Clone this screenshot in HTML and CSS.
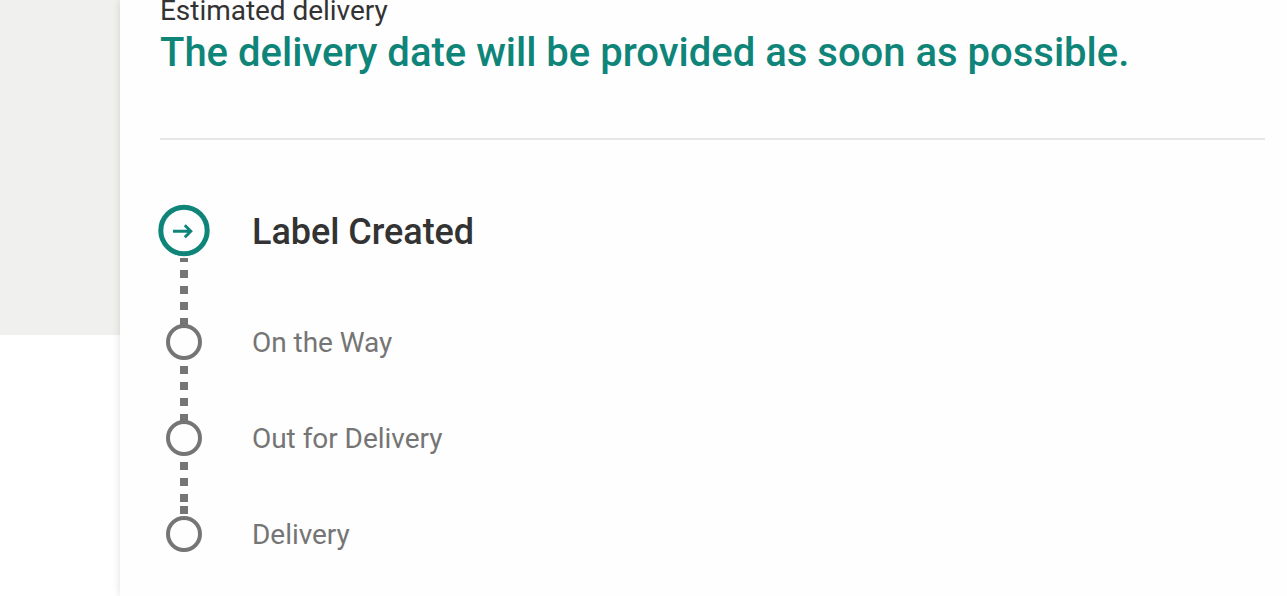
FILE: index.html
```
<!DOCTYPE html>
<html lang="en">

<head>
    <meta charset="UTF-8">
    <meta name="viewport" content="width=device-width, initial-scale=1.0">
    <title>Estimated delivery</title>
    <link rel="stylesheet" href="styles.css">
</head>

<body>
    <div class="page">
        <div class="side"></div>
        <main class="card">
            <p class="label">Estimated delivery</p>
            <h1>The delivery date will be provided as soon as possible.</h1>
            <hr>
            <ul class="steps">
                <li class="step current">
                    <svg class="marker" width="52" height="122" viewBox="0 0 52 122" fill="#757575">
                        <circle cx="26" cy="26.5" r="23.2" fill="none" stroke="#0f857a" stroke-width="5"/>
                        <path d="M15 27.2h17.5M26.8 21.2l6 6-6 6" fill="none" stroke="#0f857a" stroke-width="2.9"/>
                        <path d="M22 54h8v4h-8zM22 66h8v8h-8zM22 82h8v8h-8zM22 98h8v8h-8zM22 114h8v8h-8z"/>
                    </svg>
                    <span>Label Created</span>
                </li>
                <li class="step">
                    <svg class="marker" width="52" height="98" viewBox="0 0 52 98" fill="#757575">
                        <circle cx="26" cy="18" r="16" fill="none" stroke="#757575" stroke-width="4"/>
                        <path d="M22 42h8v8h-8zM22 58h8v8h-8zM22 74h8v8h-8zM22 90h8v8h-8z"/>
                    </svg>
                    <span>On the Way</span>
                </li>
                <li class="step">
                    <svg class="marker" width="52" height="98" viewBox="0 0 52 98" fill="#757575">
                        <circle cx="26" cy="18" r="16" fill="none" stroke="#757575" stroke-width="4"/>
                        <path d="M22 42h8v8h-8zM22 58h8v8h-8zM22 74h8v8h-8zM22 86h8v8h-8z"/>
                    </svg>
                    <span>Out for Delivery</span>
                </li>
                <li class="step">
                    <svg class="marker" width="52" height="36" viewBox="0 0 52 36">
                        <circle cx="26" cy="18" r="16" fill="none" stroke="#757575" stroke-width="4"/>
                    </svg>
                    <span>Delivery</span>
                </li>
            </ul>
        </main>
    </div>
</body>

</html>
```
FILE: styles.css
```
body {
    margin: 0;
    background: #fff;
    color: #333;
    font-family: Roboto, "Liberation Sans", sans-serif;
}
.page {
    display: flex;
    height: 596px;
    overflow: hidden;
}
.side {
    width: 120px;
    height: 335px;
    flex-shrink: 0;
    background: #f0f0ef;
}
.card {
    flex: 1;
    padding: 0 22px 0 40px;
    background: #fefefe;
    box-shadow: 0 0 8px rgba(0, 0, 0, 0.13);
}
.label {
    margin: 0;
    font-size: 28px;
    line-height: 22px;
    letter-spacing: -0.04px;
}
h1 {
    margin: 0;
    color: #0f857a;
    font-size: 40px;
    font-weight: 500;
    line-height: 62px;
    white-space: nowrap;
}
hr {
    height: 2px;
    margin: 54px 0 64px;
    border: none;
    background: #e6e6e6;
}
.steps {
    margin: 0 0 0 -2px;
    padding: 0;
    list-style: none;
}
.step {
    display: flex;
    align-items: flex-start;
    gap: 42px;
    height: 96px;
    color: #757575;
    font-size: 28px;
    line-height: 37px;
    letter-spacing: -0.04px;
}
.step.current {
    height: 120px;
    color: #333;
    font-size: 36px;
    font-weight: 500;
    line-height: 57px;
}
.marker {
    flex-shrink: 0;
}
```
